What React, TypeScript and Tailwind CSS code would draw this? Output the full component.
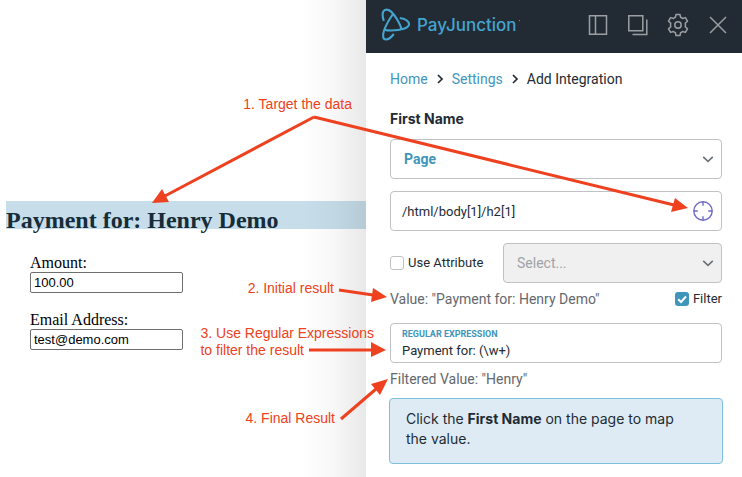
import { ReactNode } from "react";

const box = "h-10 w-full rounded border border-[#bfc1c4]";

const arrows = [
  { line: "314,117 163,197", head: "152,203 162,189 169,202" },
  { line: "314,117 674,205", head: "688,208 675,198 671,212" },
  { line: "339,290 373,295", head: "387,297 373,288 371,302" },
  { line: "309,350 372,350", head: "386,350 371,342 371,357" },
  { line: "341,419 376,389", head: "388,379 371,384 380,395" },
];

const notes = [
  { text: "1. Target the data", place: "right-[390px] top-24" },
  { text: "2. Initial result", place: "right-[408px] top-[280px]" },
  { text: "3. Use Regular Expressions\nto filter the result", place: "right-[368px] top-[325px]" },
  { text: "4. Final Result", place: "right-[407px] top-[410px]" },
];

function Chevron() {
  return (
    <svg
      viewBox="0 0 12 12"
      className="pointer-events-none absolute top-[14px] right-2 h-3 w-3"
      fill="none"
      stroke="#6b7177"
      strokeWidth="1.6"
    >
      <path d="M1.200 3.800 6 8.400l4.800-4.600" />
    </svg>
  );
}

function CrumbArrow() {
  return (
    <svg viewBox="0 0 8 10" className="h-[10px] w-2" fill="none" stroke="#222b34" strokeWidth="1.7">
      <path d="M2 1l4 4-4 4" />
    </svg>
  );
}

function Logo() {
  return (
    <svg viewBox="0 0 30 34" className="h-[34px] w-[30px]" fill="none" stroke="#45a4cf" strokeWidth="2.1" strokeLinejoin="round">
      <path d="M2.800 13C1.200 8 1.300 3.300 4 1.900 7.500.6 12 4.800 15.500 10.500c2.500 4 4.400 7.500 5 11" />
      <path d="M18.800 10c5.500.9 9.200 3.500 9.200 6.300 0 3.700-8 6.200-17.500 6.200-3 0-5.500-.2-7.300-.8" />
      <path d="M12 6C8.500 11 5 17 3 22.500 1.300 28 1.800 31.500 5 31.500c2.500 0 5.200-2 7.800-5.500" />
    </svg>
  );
}

function IconButton({ label, children }: { label: string; children: ReactNode }) {
  return (
    <button type="button" aria-label={label} className="h-6 w-6 cursor-pointer">
      <svg viewBox="0 0 24 24" className="h-6 w-6" fill="none" stroke="#9b9fa3" strokeWidth="1.5">
        {children}
      </svg>
    </button>
  );
}

function Header() {
  return (
    <header className="flex h-[53px] items-center justify-between bg-[#222b34] pr-3 pl-[15px]">
      <div className="flex items-center gap-[6px] pb-1">
        <Logo />
        <span className="relative font-['Inter',sans-serif] text-[17px] leading-5 font-medium text-[#45a4cf]">
          PayJunction
          <span className="absolute top-[5px] -right-[3px] h-px w-px bg-[#45a4cf]" />
        </span>
      </div>
      <div className="flex gap-4 pb-1">
        <IconButton label="Dock panel">
          <path d="M3.500 2.800h17v18.500h-17zM9.500 2.800v18.500" />
        </IconButton>
        <IconButton label="Pop out">
          <path d="M2.800 2.800h14v15h-14zM20.800 6.500v15H6.500" />
        </IconButton>
        <IconButton label="Settings">
          <circle cx="12" cy="12" r="3.200" />
          <path
            d="M10 1.500h4l.6 2.800q1.100.4 2 1.200l2.800-.9 2.100 3.600-2.200 1.900q.3 1.900 0 3.800l2.200 1.900-2.100 3.600-2.800-.9q-.9.800-2 1.200l-.6 2.800h-4l-.6-2.800q-1.100-.4-2-1.200l-2.800.9-2.100-3.600 2.200-1.900q-.3-1.900 0-3.800L2.500 8.200l2.100-3.600 2.800.9q.9-.8 2-1.200z"
            strokeLinejoin="round"
          />
        </IconButton>
        <IconButton label="Close">
          <path d="M4 4l16 16M20 4 4 20" />
        </IconButton>
      </div>
    </header>
  );
}

function DemoPage() {
  const input =
    "block h-[21px] w-[153px] rounded-xs border border-[#6f6f6f] bg-white px-[3px] font-['Liberation_Sans',sans-serif] text-[13px] text-black";
  return (
    <main className="relative min-w-0 flex-1 pt-[201px] pl-[6px] font-['Liberation_Serif',serif] text-black">
      <h2 className="h-7 bg-[#c7deea] pt-[5px] text-2xl leading-7 font-bold text-[#172c39]">Payment for: Henry Demo</h2>
      <form className="mt-[25px] flex flex-col gap-[18px] pl-6 text-base leading-[18px]">
        <div>
          <label htmlFor="amount" className="block">Amount:</label>
          <input id="amount" className={input} defaultValue="100.00" />
        </div>
        <div>
          <label htmlFor="email" className="block">Email Address:</label>
          <input id="email" className={input} defaultValue="test@demo.com" />
        </div>
      </form>
      {/* shade cast by the side panel */}
      <div className="pointer-events-none absolute inset-y-0 right-0 w-16 bg-linear-to-r from-black/0 via-black/3 to-black/9" />
    </main>
  );
}

function IntegrationPanel() {
  return (
    <aside className="w-[376px] shrink-0 bg-white font-['Roboto',sans-serif] text-sm leading-4 text-[#222b34]">
      <Header />
      <div className="pt-[18px] pr-5 pb-3 pl-6">
        <nav aria-label="Breadcrumb" className="flex items-center gap-2">
          <a href="#home" className="text-[#3f96ba]">Home</a>
          <CrumbArrow />
          <a href="#settings" className="text-[#3f96ba]">Settings</a>
          <CrumbArrow />
          <span>Add Integration</span>
        </nav>

        <label htmlFor="source" className="mt-6 block font-['Inter',sans-serif] font-bold">First Name</label>
        <div className="relative mt-3">
          <select id="source" className={`${box} appearance-none bg-white px-[13px] font-bold text-[#3f96ba]`}>
            <option>Page</option>
          </select>
          <Chevron />
        </div>

        <div className="relative mt-3">
          <input aria-label="Element path" className={`${box} bg-white px-[11px] text-[13px]`} defaultValue="/html/body[1]/h2[1]" />
          <button type="button" aria-label="Pick element" className="absolute top-[9px] right-2 cursor-pointer">
            <svg viewBox="0 0 22 22" className="h-[22px] w-[22px]" fill="none" stroke="#6f6ac8" strokeWidth="1.4">
              <circle cx="11" cy="11" r="9.200" />
              <path d="M11 1.800v4M11 16.200v4M1.800 11h4M16.200 11h4" />
            </svg>
          </button>
        </div>

        <div className="mt-3 flex items-center justify-between">
          <label className="flex items-center gap-1 text-[13px]">
            <input type="checkbox" className="h-[14px] w-[14px] appearance-none rounded-[3px] border border-[#bfc1c4] bg-white" />
            Use Attribute
          </label>
          <div className="relative w-[219px]">
            <select
              aria-label="Attribute"
              disabled
              className={`${box} appearance-none bg-[#f0f0f0] px-[13px] text-[#a0a3a6] opacity-100`}
            >
              <option>Select...</option>
            </select>
            <Chevron />
          </div>
        </div>

        <div className="mt-2 flex items-center justify-between">
          <span className="text-[#63686d]">Value: "Payment for: Henry Demo"</span>
          <label className="flex items-center gap-1 text-[13px]">
            <span className="relative flex">
              <input type="checkbox" defaultChecked className="peer h-[14px] w-[14px] appearance-none rounded-[3px] bg-[#3f96ba]" />
              <svg
                viewBox="0 0 14 14"
                className="pointer-events-none absolute inset-0 hidden h-[14px] w-[14px] peer-checked:block"
                fill="none"
                stroke="white"
                strokeWidth="2"
              >
                <path d="M3.200 7.200 6 10l5-5.500" />
              </svg>
            </span>
            Filter
          </label>
        </div>

        <div className={`${box} mt-4 flex flex-col px-[11px] pt-1`}>
          <label htmlFor="regex" className="text-[9px] leading-3 font-bold text-[#3f96ba]">REGULAR EXPRESSION</label>
          <input id="regex" className="h-5 w-full bg-transparent text-[13px] outline-none" defaultValue="Payment for: (\w+)" />
        </div>
        <p className="mt-2 text-[#63686d]">Filtered Value: "Henry"</p>

        <div className="-mx-px mt-[11px] h-[66px] rounded border border-[#7cc0dc] bg-[#deebf5] pt-[10px] pr-9 pl-4 font-['Inter',sans-serif] leading-5">
          Click the <strong>First Name</strong> on the page to map the value.
        </div>
      </div>
    </aside>
  );
}

export default function App() {
  return (
    <div className="relative flex min-h-screen bg-white">
      <DemoPage />
      <IntegrationPanel />
      <svg viewBox="0 0 742 477" className="pointer-events-none absolute top-0 right-0 h-[477px] w-[742px]" fill="none">
        {arrows.map((a) => (
          <g key={a.head}>
            <polyline points={a.line} stroke="#ee4120" strokeWidth="3" />
            <polygon points={a.head} fill="#ee4120" />
          </g>
        ))}
      </svg>
      {notes.map((n) => (
        <p
          key={n.text}
          className={`pointer-events-none absolute ${n.place} font-['Liberation_Sans',sans-serif] text-sm leading-[17px] whitespace-pre text-[#ee4120]`}
        >
          {n.text}
        </p>
      ))}
    </div>
  );
}
